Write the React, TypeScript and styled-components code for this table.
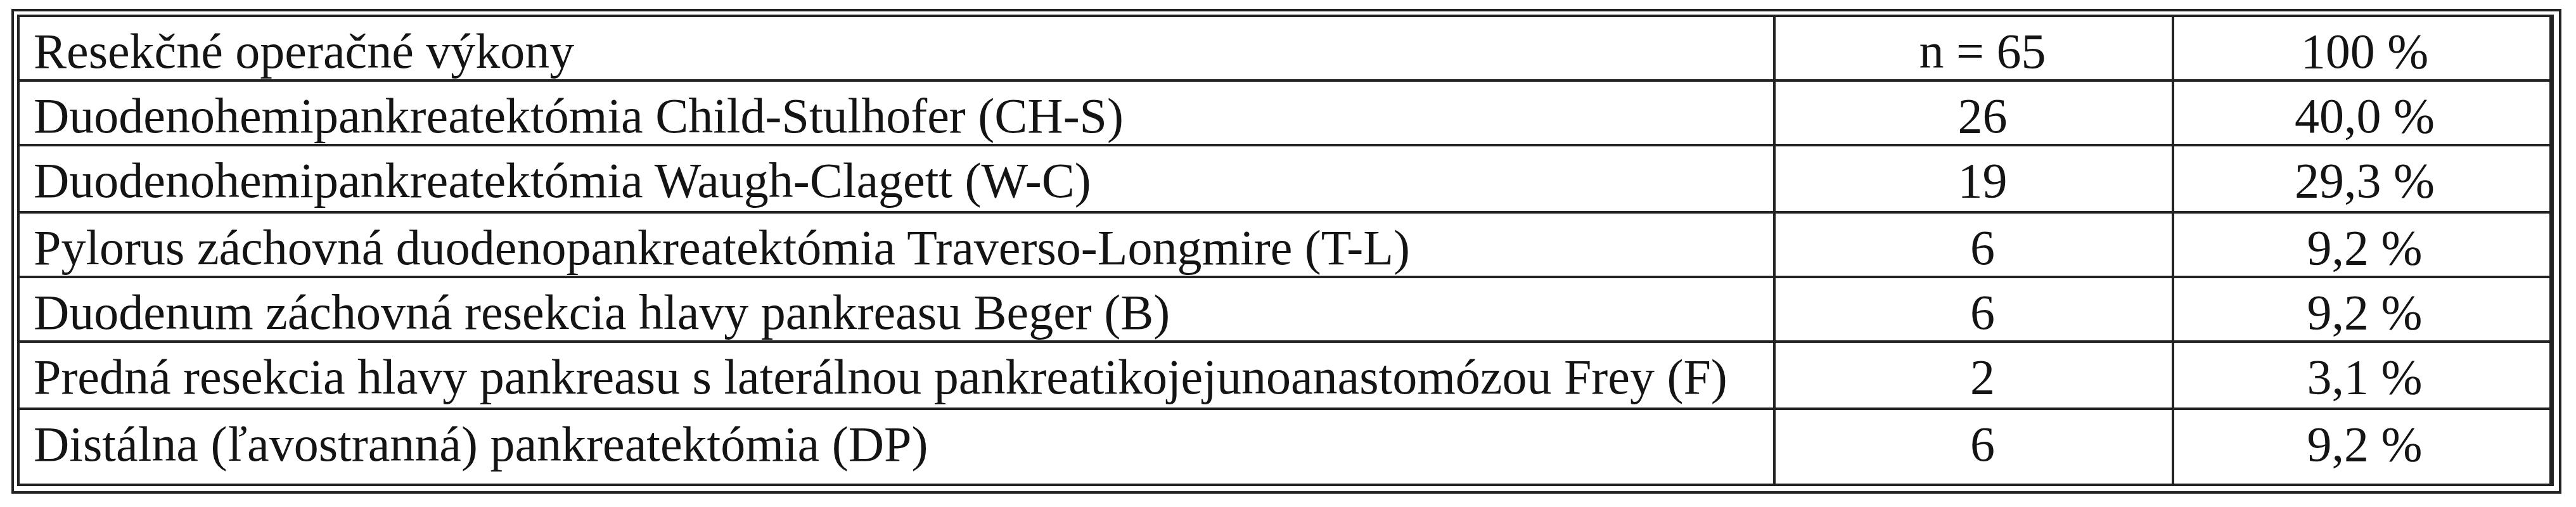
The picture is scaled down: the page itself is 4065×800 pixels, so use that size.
import { Fragment } from 'react';
import styled, { createGlobalStyle } from 'styled-components';

const GlobalStyle = createGlobalStyle`
    html, body {
        margin: 0;
        padding: 0;
        background: #ffffff;
    }
    body {
        font-family: "Liberation Serif", "Times New Roman", serif;
        color: #141414;
    }
`;

const Frame = styled.div`
    margin: 14px 0 0 18px;
    width: 4024px;
    box-sizing: border-box;
    border: 4px solid #222222;
    padding: 5px 8px 8px 5px;
`;

const Table = styled.div`
    display: grid;
    grid-template-columns: 2767px 625px 592px;
    grid-template-rows: 98px 98px 102px 98px 98px 102px 116px;
    gap: 4px;
    padding: 4px;
    background: #222222;
`;

const Cell = styled.div<{ $align?: 'left' | 'center'; $shift?: number }>`
    background: #ffffff;
    box-sizing: border-box;
    padding-top: 9px;
    padding-left: ${(p) => (p.$align === 'center' ? p.$shift ?? 0 : 22)}px;
    font-size: 78px;
    line-height: 89px;
    white-space: nowrap;
    text-align: ${(p) => p.$align ?? 'left'};
`;

const rows: [string, string, string][] = [
    ['Resekčné operačné výkony', 'n = 65', '100 %'],
    ['Duodenohemipankreatektómia Child-Stulhofer (CH-S)', '26', '40,0 %'],
    ['Duodenohemipankreatektómia Waugh-Clagett (W-C)', '19', '29,3 %'],
    ['Pylorus záchovná duodenopankreatektómia Traverso-Longmire (T-L)', '6', '9,2 %'],
    ['Duodenum záchovná resekcia hlavy pankreasu Beger (B)', '6', '9,2 %'],
    ['Predná resekcia hlavy pankreasu s laterálnou pankreatikojejunoanastomózou Frey (F)', '2', '3,1 %'],
    ['Distálna (ľavostranná) pankreatektómia (DP)', '6', '9,2 %'],
];

export default function App() {
    return (
        <>
            <GlobalStyle />
            <Frame>
                <Table>
                    {rows.map(([label, count, share]) => (
                        <Fragment key={label}>
                            <Cell>{label}</Cell>
                            <Cell $align="center" $shift={28}>
                                {count}
                            </Cell>
                            <Cell $align="center" $shift={9}>
                                {share}
                            </Cell>
                        </Fragment>
                    ))}
                </Table>
            </Frame>
        </>
    );
}
